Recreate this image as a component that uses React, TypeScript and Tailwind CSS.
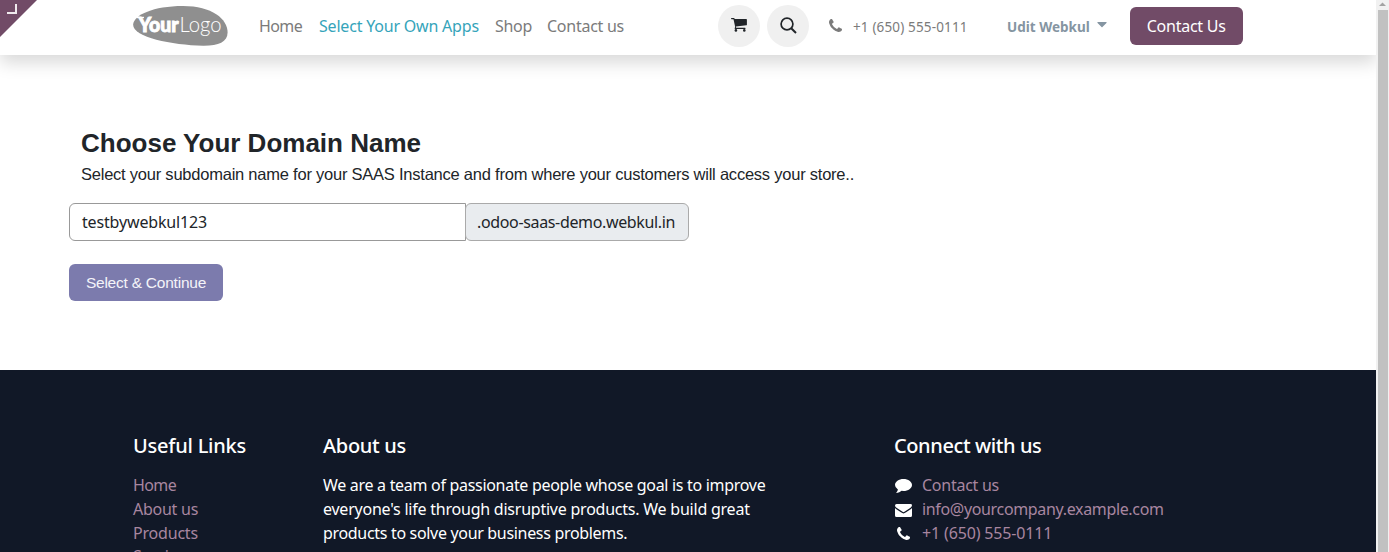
import { FaCaretDown } from "react-icons/fa";

function Logo() {
  return (
    <svg className="h-10 w-[95px]" viewBox="0 0 95 40" aria-label="Your Logo">
      <path
        d="M0.200 18C1.500 9 20 0 50 0C79 0 94.600 13 94.600 26.500C94.600 36 85 40 70 39.800C38 39 -1.500 31 0.200 18Z"
        fill="#8f8f8f"
      />
      <path d="M4 10.800h7v1.400H4z" fill="#fff" />
      <text x="5.500" y="25.800" fontFamily="Lato, sans-serif" fontSize="20" fontWeight="900" fill="#fff" stroke="#fff" strokeWidth="0.900" textLength="40" lengthAdjust="spacingAndGlyphs">
        Your
      </text>
      <text x="46.500" y="25.800" fontFamily="Lato, sans-serif" fontSize="21" fontWeight="300" fill="#fff" textLength="42" lengthAdjust="spacingAndGlyphs">
        Logo
      </text>
    </svg>
  );
}

function PhoneIcon({ className }: { className: string }) {
  return (
    <svg className={className} viewBox="0 128 1408 1408" fill="currentColor">
      <path d="M1408 1240q0 27-10 70.500t-21 68.500q-21 50-122 106-94 51-186 51-27 0-52.500-3.500t-57.500-12.500-47.500-14.500-55.500-20.500-49-18q-98-35-175-83-128-79-264.500-215.500t-215.500-264.500q-48-77-83-175-3-9-18-49t-20.500-55.500-14.500-47.500-12.500-57.500-3.500-52.500q0-92 51-186 56-101 106-122 25-11 68.500-21t70.500-10q14 0 21 3 18 6 53 76 11 19 30 54t35 63.500 31 53.500q3 4 17.500 25t21.500 35.500 7 28.500q0 20-28.500 50t-62 55-62 53-28.500 46q0 9 5 22.500t8.500 20.500 14 24 11.500 19q76 137 174 235t235 174q2 1 19 11.500t24 14 20.500 8.500 22.500 5q18 0 46-28.500t53-62 55-62 50-28.500q14 0 28.500 7t35.500 21.500 25 17.500q25 15 53.500 31t63.500 35 54 30q70 35 76 53 3 7 3 21z" />
    </svg>
  );
}

function CartIcon() {
  return (
    <svg className="-mt-[2px] h-[14px] w-[16px]" viewBox="0 0 16 14" fill="currentColor">
      <path d="M0 .5Q0 0 .6 0H2.900Q3.500 0 3.700 1.100H15.300Q15.900 1.100 15.900 1.700V6.700Q15.900 7.200 15.300 7.300L5 8.500Q5.300 9.200 5 9.700H14Q14.600 9.800 14.600 10.300T14 10.900H4.200Q3.500 10.900 3.600 10.200L4.200 8.900L2.500 1.200H.6Q0 1.100 0 .5Z" />
      <circle cx="4.900" cy="12.400" r="1.300" />
      <circle cx="13.300" cy="12.400" r="1.300" />
    </svg>
  );
}

function CommentIcon() {
  return (
    <svg className="mt-[2px] mr-[10px] ml-px h-[14px] w-[17px] text-white" viewBox="0 0 17 14" fill="currentColor">
      <path d="M8.500 0C13.200 0 17 2.700 17 6S13.200 12 8.500 12Q7.500 12 6.600 11.850Q4.500 13.600 1.700 14Q1.200 14 1.400 13.400Q2.700 12.100 2.900 10.600Q0 8.700 0 6C0 2.700 3.800 0 8.500 0Z" />
    </svg>
  );
}

function EnvelopeIcon() {
  return (
    <svg className="mt-[2px] mr-[10px] ml-px h-[13px] w-[17px] text-white" viewBox="0 0 17 13" fill="currentColor">
      <path d="M1.500 0H15.500Q17 0 17 1.300Q17 2.600 15.500 3.700L10.600 7.100Q9.300 8.200 8.500 8.200T6.400 7.100L1.500 3.700Q0 2.600 0 1.400T1.500 0Z" />
      <path d="M0 4.100Q.4 4.500 1 4.900L5.900 8.300Q7.500 9.400 8.500 9.400T11.100 8.300L16 4.900Q16.600 4.500 17 4.100V11.500Q17 13 15.500 13H1.500Q0 13 0 11.500Z" />
    </svg>
  );
}

function Header() {
  return (
    <header className="relative z-10 flex h-[55px] shrink-0 items-start bg-white pl-[133px] text-[16px] leading-6 text-[#7b7b7b] shadow-[0_8px_16px_rgba(0,0,0,0.15)]">
      <div className="absolute top-0 left-0 h-[37px] w-[37px] bg-[#714b67] [clip-path:polygon(0_0,100%_0,0_100%)]">
        <span className="absolute top-1 left-[7px] h-[10px] w-[10px] border-r-2 border-b-2 border-[#f0eaee]" />
      </div>
      <a className="mt-[6px] w-[126px]"><Logo /></a>
      <nav className="mt-[14px] flex w-[459px]">
        <a className="w-[60px] tracking-[-0.600px]">Home</a>
        <a className="w-[176px] tracking-[-0.200px] text-[#35a4ba]">Select Your Own Apps</a>
        <a className="w-[52px] tracking-[-0.300px]">Shop</a>
        <a className="tracking-[-0.260px]">Contact us</a>
      </nav>
      <button className="mt-[5px] flex h-[42px] w-[42px] items-center justify-center rounded-full bg-[#f0f0f0] text-[#212529]">
        <CartIcon />
      </button>
      <button className="mt-[5px] ml-[7px] flex h-[42px] w-[42px] items-center justify-center rounded-full bg-[#f0f0f0] text-[#212529]">
        <svg className="-mt-[2px] h-[17px] w-[17px]" viewBox="0 0 17 17" fill="none" stroke="currentColor">
          <circle cx="7" cy="7" r="5.900" strokeWidth="1.700" />
          <path d="M11.200 11.200L16 16" strokeWidth="2" />
        </svg>
      </button>
      <PhoneIcon className="mt-[19px] ml-5 h-[13px] w-[13px]" />
      <span className="mt-[15px] ml-[11px] w-[154px] text-[13.500px] tracking-[0.150px]">+1 (650) 555-0111</span>
      <span className="mt-[15px] text-[13.500px] font-bold text-[#8595a2]">Udit Webkul</span>
      <FaCaretDown className="mt-4 ml-[4px] h-4 w-4 text-[#8595a2]" />
      <button className="mt-[7px] ml-5 flex h-[38px] w-[113px] items-center justify-center rounded-md bg-[#714b67] tracking-[-0.250px] text-white">
        Contact Us
      </button>
    </header>
  );
}

function DomainForm() {
  return (
    <main className="h-[315px] shrink-0 bg-white pt-[71px] pl-[69px] text-[#212529]">
      <h1 className="pl-3 font-['Liberation_Sans',sans-serif] text-[26px] leading-[34px] font-bold">Choose Your Domain Name</h1>
      <p className="mt-[2px] pl-3 font-['Liberation_Sans',sans-serif] text-[16.500px] leading-[25px] tracking-[-0.230px]">
        Select your subdomain name for your SAAS Instance and from where your customers will access your store..
      </p>
      <div className="mt-4 flex h-[38px] text-[16px]">
        <div className="flex w-[397px] items-center rounded-l-md border border-[#999] pl-3 tracking-[-0.160px]">testbywebkul123</div>
        <div className="-ml-px flex w-[224px] items-center rounded-md border border-[#aaa] bg-[#e9ecef] pl-[11px] tracking-[-0.350px]">.odoo-saas-demo.webkul.in</div>
      </div>
      <button className="mt-[23px] flex h-[37px] w-[154px] items-center justify-center rounded-md bg-[#7c7bad] font-['Liberation_Sans',sans-serif] text-[15.500px] tracking-[-0.230px] text-[#f4f4f9]">
        Select &amp; Continue
      </button>
    </main>
  );
}

function Footer() {
  return (
    <footer className="flex h-[182px] shrink-0 bg-[#111827] pt-[61px] pl-[133px] text-[16px] leading-6 whitespace-nowrap text-white">
      <section className="w-[190px]">
        <h2 className="mb-3 text-[20px] leading-[30px] font-medium tracking-[-0.230px]">Useful Links</h2>
        <ul className="text-[#a886a0]">
          <li className="tracking-[-0.600px]">Home</li>
          <li className="tracking-[-0.260px]">About us</li>
          <li className="tracking-[-0.200px]">Products</li>
          <li className="-mt-px tracking-[-0.200px]">Services</li>
        </ul>
      </section>
      <section className="w-[571px]">
        <h2 className="mb-3 text-[20px] leading-[30px] font-medium tracking-[-0.300px]">About us</h2>
        <p className="tracking-[-0.300px]">We are a team of passionate people whose goal is to improve</p>
        <p className="tracking-[-0.230px]">everyone's life through disruptive products. We build great</p>
        <p className="tracking-[-0.320px]">products to solve your business problems.</p>
      </section>
      <section>
        <h2 className="mb-3 text-[20px] leading-[30px] font-medium tracking-[-0.400px]">Connect with us</h2>
        <ul className="text-[#a886a0]">
          <li className="flex items-center tracking-[-0.260px]"><CommentIcon />Contact us</li>
          <li className="flex items-center tracking-[-0.340px]"><EnvelopeIcon />info@yourcompany.example.com</li>
          <li className="flex items-center tracking-[-0.150px]"><PhoneIcon className="mr-3 ml-[3px] h-[13px] w-[13px] text-white" />+1 (650) 555-0111</li>
        </ul>
      </section>
    </footer>
  );
}

export default function App() {
  return (
    <div className="flex h-[552px] w-[1389px] overflow-hidden bg-white font-['Noto_Sans',sans-serif]">
      <div className="relative flex w-[1376px] shrink-0 flex-col overflow-hidden">
        <Header />
        <DomainForm />
        <Footer />
      </div>
      <div className="flex w-[13px] flex-col items-center bg-[#f1f1f1]">
        <svg className="h-[10px] w-[7px] shrink-0" viewBox="0 0 7 10"><path d="M0 6L3.500 2.500L7 6Z" fill="#a3a3a3" /></svg>
        <div className="w-[10px] flex-1 bg-[#c1c1c1]" />
      </div>
    </div>
  );
}
